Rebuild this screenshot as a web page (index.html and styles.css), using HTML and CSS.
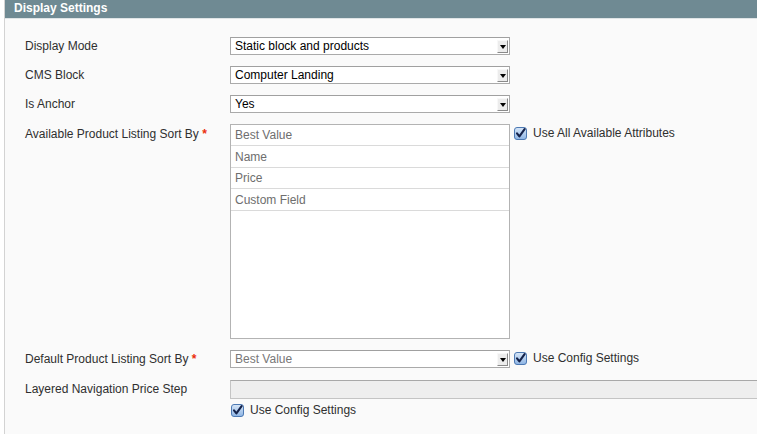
FILE: index.html
```html
<!DOCTYPE html>
<html>
<head>
<meta charset="utf-8">
<link rel="stylesheet" href="styles.css">
</head>
<body>
<div class="fieldset">
  <div class="head">Display Settings</div>
  <div class="content">
    <div class="row r-sel">
      <div class="label">Display Mode</div>
      <div class="ctrl"><div class="select"><span class="val">Static block and products</span><span class="arrow"></span></div></div>
    </div>
    <div class="row r-sel">
      <div class="label">CMS Block</div>
      <div class="ctrl"><div class="select"><span class="val">Computer Landing</span><span class="arrow"></span></div></div>
    </div>
    <div class="row r-sel">
      <div class="label">Is Anchor</div>
      <div class="ctrl"><div class="select"><span class="val">Yes</span><span class="arrow"></span></div></div>
    </div>
    <div class="row r-multi">
      <div class="label lbl-multi">Available Product Listing Sort By <span class="req">*</span></div>
      <div class="ctrl">
        <div class="multi">
          <div class="opt">Best Value</div>
          <div class="opt">Name</div>
          <div class="opt">Price</div>
          <div class="opt">Custom Field</div>
        </div>
        <label class="check check-top"><svg class="cb" width="13" height="13" viewBox="0 0 13 13"><defs><linearGradient id="g1" x1="0" y1="0" x2="0" y2="1"><stop offset="0" stop-color="#d8e7f8"/><stop offset="1" stop-color="#8db4e4"/></linearGradient></defs><rect x="0.5" y="0.5" width="12" height="12" rx="2.5" fill="url(#g1)" stroke="#4d79b3"/><path d="M3 6.3 L5.4 9.4 L10.6 2.2" fill="none" stroke="#14224a" stroke-width="2.1" stroke-linecap="round" stroke-linejoin="round"/></svg><span>Use All Available Attributes</span></label>
      </div>
    </div>
    <div class="row r-sel2">
      <div class="label">Default Product Listing Sort By <span class="req">*</span></div>
      <div class="ctrl">
        <div class="select dis"><span class="val">Best Value</span><span class="arrow"></span></div>
        <label class="check"><svg class="cb" width="13" height="13" viewBox="0 0 13 13"><defs><linearGradient id="g2" x1="0" y1="0" x2="0" y2="1"><stop offset="0" stop-color="#d8e7f8"/><stop offset="1" stop-color="#8db4e4"/></linearGradient></defs><rect x="0.5" y="0.5" width="12" height="12" rx="2.5" fill="url(#g2)" stroke="#4d79b3"/><path d="M3 6.3 L5.4 9.4 L10.6 2.2" fill="none" stroke="#14224a" stroke-width="2.1" stroke-linecap="round" stroke-linejoin="round"/></svg><span>Use Config Settings</span></label>
      </div>
    </div>
    <div class="row r-input">
      <div class="label">Layered Navigation Price Step</div>
      <div class="ctrl">
        <div class="input"></div>
      </div>
    </div>
    <div class="row r-check">
      <div class="label"></div>
      <div class="ctrl">
        <label class="check check-under"><svg class="cb" width="13" height="13" viewBox="0 0 13 13"><defs><linearGradient id="g3" x1="0" y1="0" x2="0" y2="1"><stop offset="0" stop-color="#d8e7f8"/><stop offset="1" stop-color="#8db4e4"/></linearGradient></defs><rect x="0.5" y="0.5" width="12" height="12" rx="2.5" fill="url(#g3)" stroke="#4d79b3"/><path d="M3 6.3 L5.4 9.4 L10.6 2.2" fill="none" stroke="#14224a" stroke-width="2.1" stroke-linecap="round" stroke-linejoin="round"/></svg><span>Use Config Settings</span></label>
      </div>
    </div>
  </div>
</div>
</body>
</html>
```
FILE: styles.css
```css
html, body {
  margin: 0;
  padding: 0;
  background: #ffffff;
  overflow: hidden;
}
body {
  width: 757px;
  height: 434px;
  font-family: "Liberation Sans", Arial, Helvetica, sans-serif;
  font-size: 12px;
  color: #2f2f2f;
}
.fieldset {
  margin-left: 4px;
  height: 434px;
  border-left: 1px solid #d3d3d3;
  background: #fafafa;
}
.head {
  height: 18px;
  line-height: 17px;
  background: #6f8a93;
  color: #ffffff;
  font-weight: bold;
  font-size: 12px;
  padding-left: 9px;
  border-bottom: 1px solid #dfe4e6;
}
.content {
  padding-top: 18px;
}
.row {
  display: grid;
  grid-template-columns: 205px auto;
  padding-left: 20px;
}
.label {
  line-height: 18px;
  white-space: nowrap;
}
.req {
  color: #eb2e0a;
  font-weight: bold;
}
.ctrl {
  display: flex;
  align-items: flex-start;
}
.r-sel { margin-bottom: 11px; }
.r-sel .label { line-height: 18px; }
.select {
  box-sizing: border-box;
  width: 280px;
  height: 18px;
  border: 1px solid #aaaaaa;
  border-top-color: #a0a0a0;
  background: #ffffff;
  display: flex;
  align-items: center;
  color: #000000;
}
.select .val {
  flex: 1;
  padding-left: 4px;
  line-height: 16px;
}
.select.dis .val { color: #777777; }
.arrow {
  box-sizing: border-box;
  width: 11px;
  height: 13px;
  margin-right: 1px;
  background: #ececec;
  border-left: 1px solid #f8f8f8;
  border-top: 1px solid #f8f8f8;
  border-right: 1px solid #8a8a8a;
  border-bottom: 1px solid #8a8a8a;
  display: flex;
  align-items: center;
  justify-content: center;
}
.arrow::after {
  content: "";
  width: 0;
  height: 0;
  border-left: 3px solid transparent;
  border-right: 3px solid transparent;
  border-top: 4px solid #000000;
  margin-top: 1px;
}
.r-multi { margin-bottom: 11px; }
.lbl-multi { line-height: 20px; }
.multi {
  box-sizing: border-box;
  width: 280px;
  height: 215px;
  border: 1px solid #b3b3b3;
  background: #ffffff;
}
.opt {
  height: 20px;
  line-height: 20px;
  padding-left: 4px;
  color: #6e6e6e;
  border-bottom: 1px solid #dadada;
  margin-bottom: 0.5px;
}
.check {
  display: flex;
  align-items: center;
  margin-left: 4px;
  line-height: 13px;
  color: #2f2f2f;
}
.check .cb {
  flex: none;
  margin-right: 6px;
}
.check-top { margin-top: 3px; }
.r-sel2 { margin-bottom: 12px; }
.r-sel2 .check { margin-top: 2px; }
.r-input { margin-bottom: 5px; }
.r-input .label { line-height: 19px; }
.input {
  box-sizing: border-box;
  width: 540px;
  height: 19px;
  background: #eeeeee;
  border: 1px solid #c4c4c4;
  border-top-color: #a8a8a8;
}
.check-under { margin-left: 1px; }
.check-under .cb { margin-right: 6px; }
```
